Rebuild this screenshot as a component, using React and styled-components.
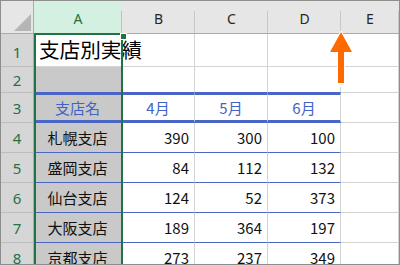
import React from "react";
import styled, { createGlobalStyle } from "styled-components";

const Global = createGlobalStyle`
  html, body { margin: 0; padding: 0; background: #fff; }
  * { box-sizing: border-box; }
`;

const GREEN = "#217346";
const BLUE = "#4a66c4";
const GRID = "#d4d4d4";
const JP = `"Noto Sans CJK JP", "Noto Sans", sans-serif`;

const Sheet = styled.div`
  position: relative;
  width: 400px;
  height: 265px;
  overflow: hidden;
  border: 1px solid #8e8e8e;
  background: #fff;
`;

const Grid = styled.div`
  display: grid;
  grid-template-columns: 33px 88px 73px 73px 73px 1fr;
  grid-template-rows: 33px 33px 26px 30px 30px 30px 30px 30px 30px;
  width: 100%;
`;

const Corner = styled.div`
  background: #e6e6e6;
  border-bottom: 1px solid #ababab;
  border-right: 1px solid #ababab;
  display: flex;
  align-items: flex-end;
  justify-content: flex-end;
  padding: 0 2px 2px 0;
`;

const ColHeader = styled.div`
  position: relative;
  background: ${(p) => (p.$active ? "#d3f0e0" : "#e6e6e6")};
  border-bottom: 1px solid ${(p) => (p.$active ? GREEN : "#ababab")};
  color: ${(p) => (p.$active ? GREEN : "#262626")};
  font-family: "Noto Sans", "Liberation Sans", sans-serif;
  font-size: 14px;
  display: flex;
  align-items: flex-end;
  justify-content: center;
  padding-bottom: 5px;
  &::after {
    content: "";
    position: absolute;
    right: 0;
    top: 10px;
    bottom: 0;
    width: 1px;
    background: ${(p) => (p.$active ? "#9fd5b7" : "#c8c8c8")};
  }
`;

const RowHeader = styled.div`
  background: #d6d6d6;
  border-bottom: 1px solid #bdbdbd;
  border-right: 1px solid #ababab;
  color: ${GREEN};
  font-family: "Noto Sans", "Liberation Sans", sans-serif;
  font-size: 15px;
  display: flex;
  align-items: center;
  justify-content: center;
  padding-top: ${(p) => p.$pt || 0}px;
`;

const Cell = styled.div`
  background: ${(p) => (p.$gray ? "#c9c9c9" : "#fff")};
  border-right: 1px solid ${(p) => (p.$noRight ? "transparent" : GRID)};
  border-top: ${(p) => (p.$thickTop ? `2px solid ${BLUE}` : "none")};
  border-bottom: ${(p) =>
    p.$thickBottom
      ? `3px solid ${BLUE}`
      : p.$blueBottom
      ? `1px solid ${BLUE}`
      : `1px solid ${p.$gray ? "#c9c9c9" : GRID}`};
  font-family: ${JP};
  font-size: 15px;
  color: ${(p) => (p.$head ? "#3f63c6" : "#111")};
  display: flex;
  align-items: center;
  justify-content: ${(p) =>
    p.$align === "right" ? "flex-end" : p.$align === "left" ? "flex-start" : "center"};
  padding: 0 5px 0 5px;
  white-space: nowrap;
  overflow: visible;
  min-width: 0;
`;

const Title = styled.span`
  font-size: 20.6px;
  color: #000;
  position: relative;
  z-index: 1;
  margin-top: -2px;
`;

const Selection = styled.div`
  position: absolute;
  left: 33px;
  top: 32px;
  width: 89px;
  bottom: -4px;
  border: 2px solid ${GREEN};
  pointer-events: none;
  z-index: 2;
`;

const Handle = styled.div`
  position: absolute;
  right: -5px;
  top: -1px;
  width: 5px;
  height: 5px;
  background: ${GREEN};
  outline: 1px solid #fff;
`;

const Overlay = styled.svg`
  position: absolute;
  left: -1px;
  top: -1px;
  width: 400px;
  height: 265px;
  pointer-events: none;
  z-index: 3;
`;

const rows = [
  ["札幌支店", 390, 300, 100],
  ["盛岡支店", 84, 112, 132],
  ["仙台支店", 124, 52, 373],
  ["大阪支店", 189, 364, 197],
  ["京都支店", 273, 237, 349],
];

export default function App() {
  return (
    <>
      <Global />
      <Sheet>
        <Grid>
          <Corner>
            <svg width="17" height="17" viewBox="0 0 17 17">
              <polygon points="17,0 17,17 0,17" fill="#b5b5b5" />
            </svg>
          </Corner>
          <ColHeader $active>A</ColHeader>
          <ColHeader>B</ColHeader>
          <ColHeader>C</ColHeader>
          <ColHeader>D</ColHeader>
          <ColHeader>E</ColHeader>

          <RowHeader $pt={4}>1</RowHeader>
          <Cell $align="left" $noRight>
            <Title>支店別実績</Title>
          </Cell>
          <Cell />
          <Cell />
          <Cell />
          <Cell />

          <RowHeader>2</RowHeader>
          <Cell $gray $blueBottom />
          <Cell $blueBottom />
          <Cell $blueBottom />
          <Cell $blueBottom />
          <Cell />

          <RowHeader>3</RowHeader>
          <Cell $gray $head $thickTop $thickBottom>支店名</Cell>
          <Cell $head $thickTop $thickBottom>4月</Cell>
          <Cell $head $thickTop $thickBottom>5月</Cell>
          <Cell $head $thickTop $thickBottom>6月</Cell>
          <Cell />

          {rows.map((r, i) => (
            <React.Fragment key={r[0]}>
              <RowHeader>{i + 4}</RowHeader>
              <Cell $gray $blueBottom>{r[0]}</Cell>
              <Cell $align="right" $blueBottom>{r[1]}</Cell>
              <Cell $align="right" $blueBottom>{r[2]}</Cell>
              <Cell $align="right" $blueBottom>{r[3]}</Cell>
              <Cell />
            </React.Fragment>
          ))}
        </Grid>

        <Selection>
          <Handle />
        </Selection>

        <Overlay viewBox="0 0 400 265">
          <line x1="341" y1="34" x2="341" y2="87" stroke="#fff" strokeWidth="3" />
          <path
            d="M341 32 L352 52 L344 52 L344 83 L338 83 L338 52 L330 52 Z"
            fill="#ff6a00"
            stroke="#fff"
            strokeWidth="2"
            strokeLinejoin="round"
            paintOrder="stroke"
          />
        </Overlay>
      </Sheet>
    </>
  );
}
